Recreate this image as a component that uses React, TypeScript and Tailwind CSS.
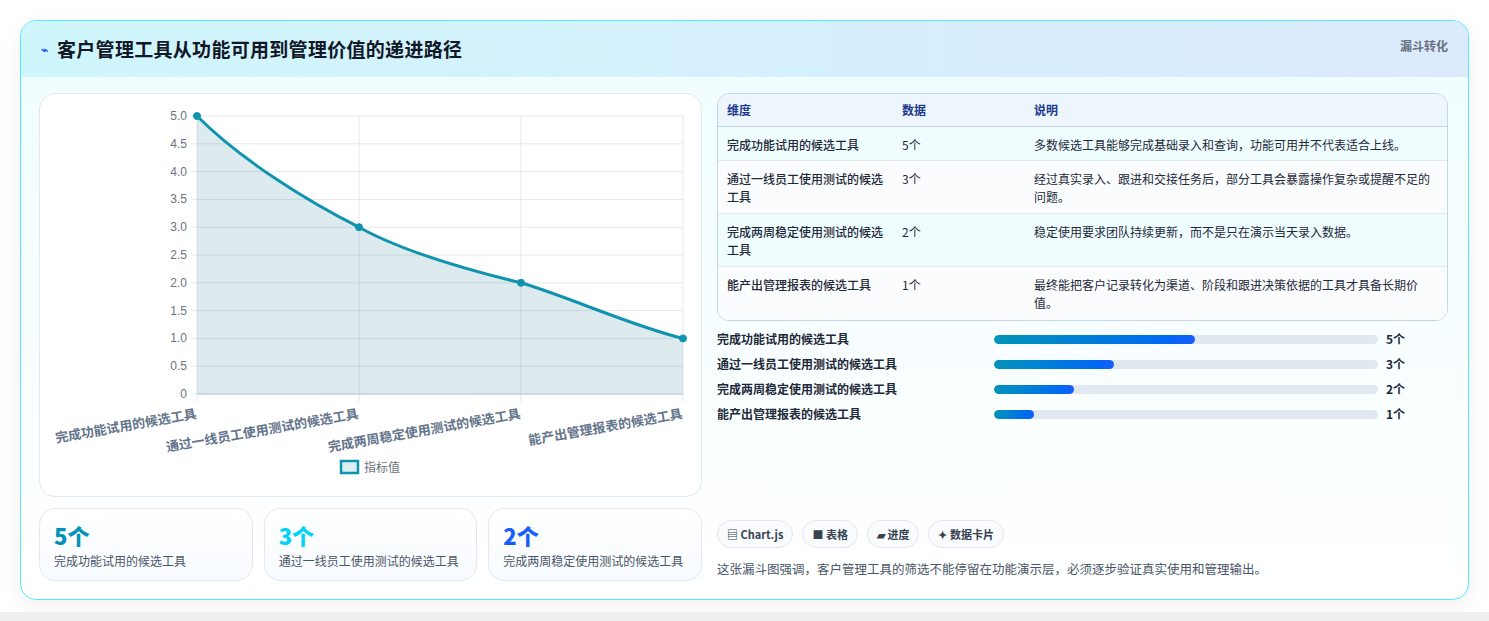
import React from "react";

const F = { fontFamily: '"Noto Sans CJK SC", "Noto Sans", sans-serif' };

const labels = ["完成功能试用的候选工具", "通过一线员工使用测试的候选工具", "完成两周稳定使用测试的候选工具", "能产出管理报表的候选工具"];
const vals = [5, 3, 2, 1];
const rows = [
  ["完成功能试用的候选工具", "5个", "多数候选工具能够完成基础录入和查询，功能可用并不代表适合上线。"],
  ["通过一线员工使用测试的候选工具", "3个", "经过真实录入、跟进和交接任务后，部分工具会暴露操作复杂或提醒不足的问题。"],
  ["完成两周稳定使用测试的候选工具", "2个", "稳定使用要求团队持续更新，而不是只在演示当天录入数据。"],
  ["能产出管理报表的候选工具", "1个", "最终能把客户记录转化为渠道、阶段和跟进决策依据的工具才具备长期价值。"],
];

function Chart() {
  const x0 = 157, x1 = 643, y0 = 22, y1 = 300;
  const xs = [0, 1, 2, 3].map((i) => x0 + ((x1 - x0) * i) / 3);
  const ys = vals.map((v) => y1 - ((y1 - y0) * v) / 5);
  const line = `M${xs[0]},${ys[0]} C${xs[0] + 45},${ys[0] + 45} ${xs[1] - 50},${ys[1] - 25} ${xs[1]},${ys[1]} C${xs[1] + 45},${ys[1] + 25} ${xs[2] - 50},${ys[2] - 12} ${xs[2]},${ys[2]} C${xs[2] + 50},${ys[2] + 15} ${xs[3] - 50},${ys[3] - 12} ${xs[3]},${ys[3]}`;
  const ticks = [0, 0.5, 1, 1.5, 2, 2.5, 3, 3.5, 4, 4.5, 5];
  return (
    <svg width="663" height="403" style={F}>
      {ticks.map((t) => {
        const y = y1 - ((y1 - y0) * t) / 5;
        return (
          <g key={t}>
            <line x1={x0 - 6} x2={x1} y1={y} y2={y} stroke="#e5e7eb" />
            <text x={x0 - 10} y={y + 4} fontSize="12" fill="#6b7280" textAnchor="end" fontFamily="Liberation Sans, sans-serif">{t === 0 ? "0" : t.toFixed(1)}</text>
          </g>
        );
      })}
      {xs.map((x, i) => <line key={i} x1={x} x2={x} y1={y0} y2={y1 + 8} stroke="#e5e7eb" />)}
      <path d={`${line} L${x1},${y1} L${x0},${y1} Z`} fill="rgba(14,116,144,0.14)" />
      <line x1={x0} x2={x1} y1={y1} y2={y1} stroke="#b6ccd6" />
      <path d={line} fill="none" stroke="#0f93ae" strokeWidth="3" />
      {xs.map((x, i) => <circle key={i} cx={x} cy={ys[i]} r="3.5" fill="#0f93ae" stroke="#0f93ae" />)}
      {labels.map((l, i) => (
        <text key={l} x={xs[i]} y={y1 + 24} fontSize="13" fontWeight="600" fill="#64748b" textAnchor="end" transform={`rotate(-10 ${xs[i]} ${y1 + 24})`}>{l}</text>
      ))}
      <rect x="301" y="367" width="17" height="12" fill="#dbeef3" stroke="#0f93ae" strokeWidth="2.5" />
      <text x="324" y="378" fontSize="12" fill="#6b7280">指标值</text>
    </svg>
  );
}

export default function App() {
  return (
    <div className="bg-white min-h-[621px] flex flex-col" style={F}>
      <div className="px-5 pt-5">
        <div className="rounded-2xl border border-cyan-300 bg-gradient-to-b from-[#effdff] to-white shadow-[0_8px_24px_rgba(0,0,0,0.06)] overflow-hidden">
          <div className="h-[56px] flex items-center justify-between pl-5 pr-5 bg-gradient-to-r from-[#cff6fc] to-[#dceafd]">
            <div className="flex items-center gap-[9px]">
              <span className="text-[12px] font-bold text-blue-600">⌁</span>
              <span className="text-[19px] font-bold text-[#111827] tracking-[0.3px]">客户管理工具从功能可用到管理价值的递进路径</span>
            </div>
            <span className="text-[12px] font-semibold text-gray-500 self-start mt-4">漏斗转化</span>
          </div>
          <div className="flex gap-[15px] pl-[18px] pr-5 pt-[16px] pb-[18px]">
            <div className="w-[663px] flex flex-col gap-[11px]">
              <div className="h-[404px] rounded-2xl border border-slate-200 bg-white"><Chart /></div>
              <div className="grid grid-cols-3 gap-[11px]">
                {[["5个", "text-cyan-600", labels[0]], ["3个", "text-cyan-400", labels[1]], ["2个", "text-blue-600", labels[2]]].map(([v, c, l]) => (
                  <div key={l} className="h-[73px] rounded-2xl border border-slate-200 bg-gradient-to-b from-white to-[#f7fbff] px-[14px] pt-[12px]">
                    <div className={`text-[22px] font-extrabold leading-[28px] ${c}`}>{v}</div>
                    <div className="text-[12px] text-gray-600 mt-[3px]">{l}</div>
                  </div>
                ))}
              </div>
            </div>
            <div className="flex-1 flex flex-col">
              <div className="rounded-xl border border-slate-300 overflow-hidden text-[12px]">
                <div className="grid grid-cols-[175px_132px_1fr] h-[33px] items-center px-[9px] bg-[#eef6fd] border-b border-slate-300 font-semibold text-blue-900">
                  <div>维度</div><div>数据</div><div>说明</div>
                </div>
                {rows.map((r, i) => (
                  <div key={i} className={`grid grid-cols-[175px_132px_1fr] px-[9px] pt-[9px] leading-[18px] ${i === 0 ? "h-[34px]" : "h-[53px]"} ${i % 2 === 0 ? "bg-[#f0fdff]" : "bg-[#fafcfd]"} ${i < 3 ? "border-b border-slate-200" : ""} text-gray-800`}>
                    <div className="pr-4 font-medium">{r[0]}</div><div>{r[1]}</div><div className="pr-2">{r[2]}</div>
                  </div>
                ))}
              </div>
              <div className="flex flex-col gap-[7px] mt-[9px]">
                {labels.map((l, i) => (
                  <div key={l} className="flex items-center h-[18px] text-[12px] font-semibold text-gray-800">
                    <div className="w-[277px]">{l}</div>
                    <div className="w-[384px] h-[9px] rounded-full bg-slate-200 overflow-hidden">
                      <div className="h-full rounded-full bg-gradient-to-r from-cyan-600 to-blue-600" style={{ width: `${[52.3, 31.2, 20.8, 10.4][i]}%` }} />
                    </div>
                    <div className="ml-[8px]">{vals[i]}个</div>
                  </div>
                ))}
              </div>
              <div className="flex-1" />
              <div className="flex gap-[9px] text-[11px] font-semibold text-gray-700">
                {["▤ Chart.js", "■ 表格", "▰ 进度", "✦ 数据卡片"].map((c) => (
                  <span key={c} className="h-[28px] px-[9px] flex items-center rounded-full border border-slate-200 bg-[#f9fbfc]">{c}</span>
                ))}
              </div>
              <div className="mt-[12px] text-[12.5px] text-gray-600 mb-[2px]">这张漏斗图强调，客户管理工具的筛选不能停留在功能演示层，必须逐步验证真实使用和管理输出。</div>
            </div>
          </div>
        </div>
      </div>
      <div className="flex-1" />
      <div className="h-[9px] bg-[#efeff1]" />
    </div>
  );
}
